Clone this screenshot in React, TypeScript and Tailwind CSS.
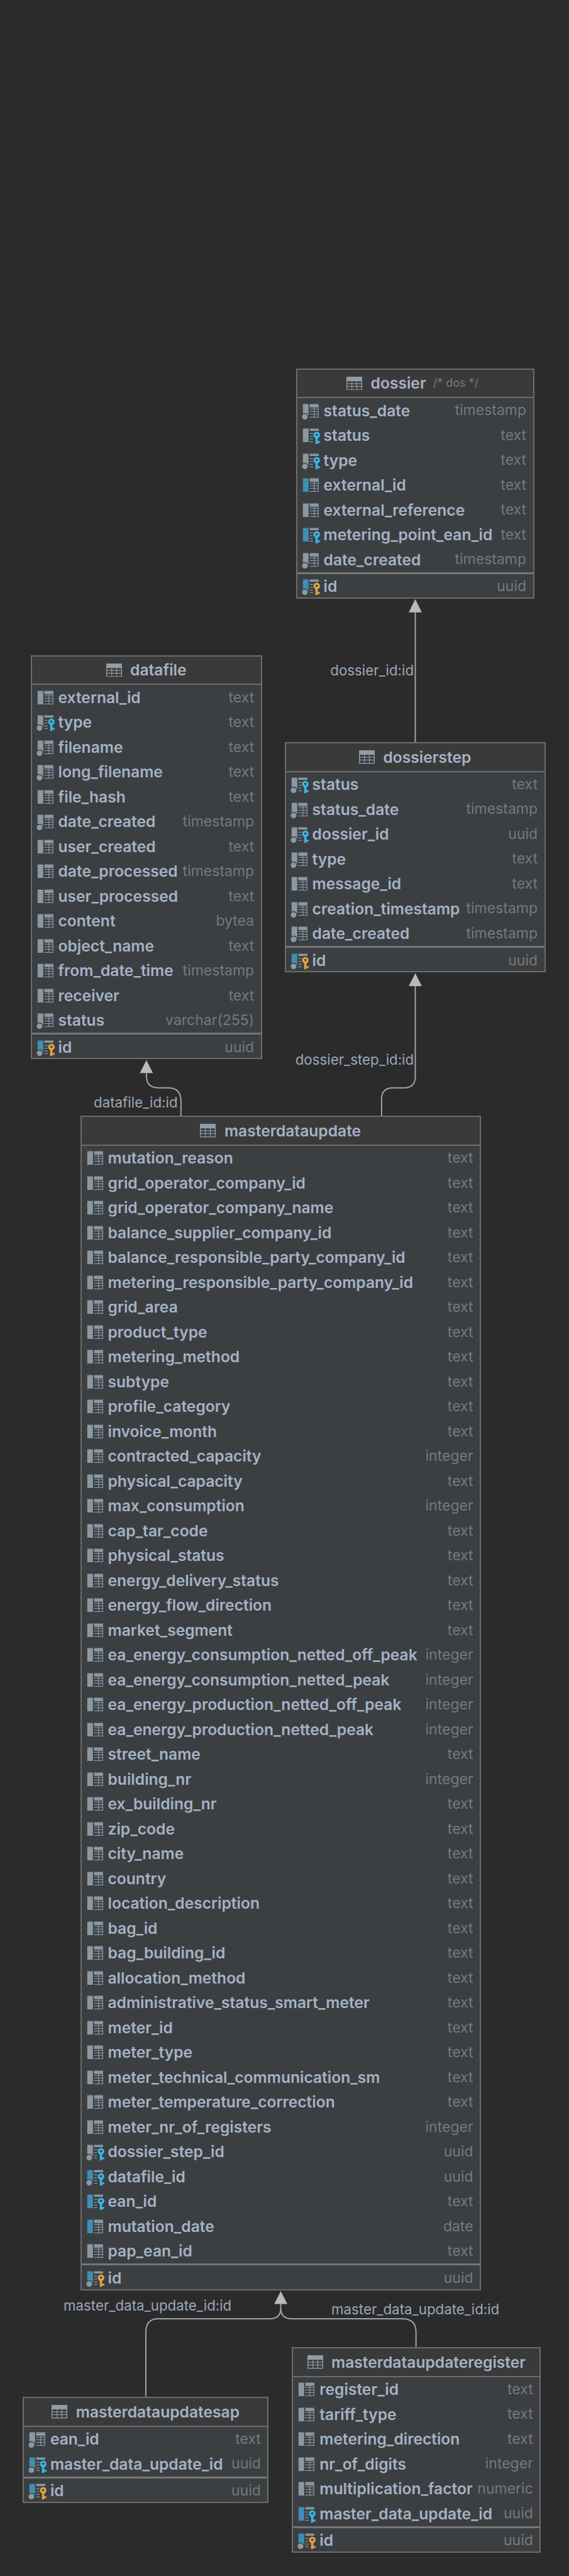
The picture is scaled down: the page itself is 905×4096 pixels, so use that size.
// Database diagram: six tables on a free canvas, joined by foreign key arrows.
// Measurements come from the 1008px reference, scaled by 0.898.

type Col = [name: string, type: string, flags?: string];

// flags: b = indexed (blue bar), n = not null (dot), f = foreign key, p = primary key
const DOSSIER: Col[] = [
  ['status_date', 'timestamp', 'n'],
  ['status', 'text', 'f'],
  ['type', 'text', 'nf'],
  ['external_id', 'text', 'b'],
  ['external_reference', 'text'],
  ['metering_point_ean_id', 'text', 'bf'],
  ['date_created', 'timestamp', 'n'],
];

const DATAFILE: Col[] = [
  ['external_id', 'text'],
  ['type', 'text', 'nf'],
  ['filename', 'text', 'n'],
  ['long_filename', 'text', 'n'],
  ['file_hash', 'text'],
  ['date_created', 'timestamp', 'n'],
  ['user_created', 'text'],
  ['date_processed', 'timestamp'],
  ['user_processed', 'text'],
  ['content', 'bytea'],
  ['object_name', 'text'],
  ['from_date_time', 'timestamp'],
  ['receiver', 'text'],
  ['status', 'varchar(255)', 'n'],
];

const DOSSIERSTEP: Col[] = [
  ['status', 'text', 'nf'],
  ['status_date', 'timestamp', 'n'],
  ['dossier_id', 'uuid', 'nf'],
  ['type', 'text', 'n'],
  ['message_id', 'text'],
  ['creation_timestamp', 'timestamp', 'n'],
  ['date_created', 'timestamp', 'n'],
];

const MASTER: Col[] = [
  ['mutation_reason', 'text'],
  ['grid_operator_company_id', 'text'],
  ['grid_operator_company_name', 'text'],
  ['balance_supplier_company_id', 'text'],
  ['balance_responsible_party_company_id', 'text'],
  ['metering_responsible_party_company_id', 'text'],
  ['grid_area', 'text'],
  ['product_type', 'text'],
  ['metering_method', 'text'],
  ['subtype', 'text'],
  ['profile_category', 'text'],
  ['invoice_month', 'text'],
  ['contracted_capacity', 'integer'],
  ['physical_capacity', 'text'],
  ['max_consumption', 'integer'],
  ['cap_tar_code', 'text'],
  ['physical_status', 'text'],
  ['energy_delivery_status', 'text'],
  ['energy_flow_direction', 'text'],
  ['market_segment', 'text'],
  ['ea_energy_consumption_netted_off_peak', 'integer'],
  ['ea_energy_consumption_netted_peak', 'integer'],
  ['ea_energy_production_netted_off_peak', 'integer'],
  ['ea_energy_production_netted_peak', 'integer'],
  ['street_name', 'text'],
  ['building_nr', 'integer'],
  ['ex_building_nr', 'text'],
  ['zip_code', 'text'],
  ['city_name', 'text'],
  ['country', 'text'],
  ['location_description', 'text'],
  ['bag_id', 'text'],
  ['bag_building_id', 'text'],
  ['allocation_method', 'text'],
  ['administrative_status_smart_meter', 'text'],
  ['meter_id', 'text'],
  ['meter_type', 'text'],
  ['meter_technical_communication_sm', 'text'],
  ['meter_temperature_correction', 'text'],
  ['meter_nr_of_registers', 'integer'],
  ['dossier_step_id', 'uuid', 'nf'],
  ['datafile_id', 'uuid', 'bnf'],
  ['ean_id', 'text', 'bf'],
  ['mutation_date', 'date', 'b'],
  ['pap_ean_id', 'text'],
];

const SAP: Col[] = [
  ['ean_id', 'text', 'n'],
  ['master_data_update_id', 'uuid', 'bnf'],
];

const REGISTER: Col[] = [
  ['register_id', 'text'],
  ['tariff_type', 'text'],
  ['metering_direction', 'text'],
  ['nr_of_digits', 'integer'],
  ['multiplication_factor', 'numeric'],
  ['master_data_update_id', 'uuid', 'bf'],
];

const ID: Col = ['id', 'uuid', 'bnp'];

const GREY = '#8a98a3';
const BLUE = '#3f8fb2';
const BODY = '#3b3f42';

function ColumnIcon({ flags = '' }: { flags?: string }) {
  const blue = flags.includes('b');
  const dot = flags.includes('n');
  const keyColor = flags.includes('p') ? '#e0a33c' : flags.includes('f') ? '#3cb4e5' : null;
  return (
    <svg viewBox="0 0 34 34" className="w-[30.5px] h-[30.5px] shrink-0">
      <rect x="2" y="5" width="10" height="24" fill={blue ? BLUE : GREY} />
      {keyColor ? (
        <g fill={GREY}>
          <rect x="14" y="5" width="16" height="4" />
          <rect x="14" y="13" width="6" height="1.4" />
          <rect x="14" y="18" width="6" height="1.4" />
          <rect x="14" y="23" width="6" height="1.4" />
          <rect x="14" y="27.6" width="6" height="1.4" />
        </g>
      ) : (
        <g fill={GREY}>
          <rect x="14" y="5" width="16" height="6" />
          <rect x="14" y="13" width="16" height="1.3" />
          <rect x="14" y="17.6" width="16" height="1.3" />
          <rect x="14" y="22.2" width="16" height="1.3" />
          <rect x="14" y="27.7" width="16" height="1.3" />
          <rect x="21.4" y="11" width="1.3" height="18" />
          <rect x="28.7" y="11" width="1.3" height="18" />
        </g>
      )}
      {dot && (
        <>
          <circle cx="5.5" cy="27.5" r="6.6" fill={BODY} />
          <rect x="13" y="24" width="1" height="8" fill={BODY} />
          <circle cx="5.5" cy="27.5" r="5" fill="#8e99a3" />
        </>
      )}
      {keyColor && (
        <>
          <circle cx="26.4" cy="17" r="7.2" fill={BODY} />
          <rect x="22.4" y="20" width="10" height="12" fill={BODY} />
          <g fill={keyColor}>
            <circle cx="26.4" cy="16.4" r="5.8" />
            <rect x="24.2" y="20" width="4.2" height="12.4" />
            <rect x="28" y="27" width="4.2" height="3.4" />
          </g>
          <circle cx="26.4" cy="16.2" r="2" fill={BODY} />
        </>
      )}
    </svg>
  );
}

function TableIcon() {
  return (
    <svg viewBox="0 0 28 24" className="w-[25px] h-[21.5px] shrink-0">
      <rect width="28" height="24" fill="#8f9daa" />
      <g fill="#3a3a3a">
        <rect x="1.5" y="8" width="7.5" height="3.6" />
        <rect x="10.3" y="8" width="7.5" height="3.6" />
        <rect x="19.1" y="8" width="7.4" height="3.6" />
        <rect x="1.5" y="13" width="7.5" height="3.6" />
        <rect x="10.3" y="13" width="7.5" height="3.6" />
        <rect x="19.1" y="13" width="7.4" height="3.6" />
        <rect x="1.5" y="18" width="7.5" height="4.5" />
        <rect x="10.3" y="18" width="7.5" height="4.5" />
        <rect x="19.1" y="18" width="7.4" height="4.5" />
      </g>
    </svg>
  );
}

function Row({ col, className = 'h-[39.51px]' }: { col: Col; className?: string }) {
  return (
    <div className={`flex items-center justify-between pl-[7px] pr-[10.5px] whitespace-nowrap ${className}`}>
      <div className="flex items-center min-w-0">
        <ColumnIcon flags={col[2]} />
        <span className="ml-[4.5px] font-semibold text-[24.6px] text-[#a5b2c4]">{col[0]}</span>
      </div>
      <span className="text-[23px] text-[#787878]">{col[1]}</span>
    </div>
  );
}

function DbTable({ title, comment, cols, className }: { title: string; comment?: string; cols: Col[]; className: string }) {
  return (
    <div className={`absolute border-2 border-[#6c6c6c] bg-[#3b3f42] leading-none ${className}`}>
      <div className={`h-[45.6px] flex items-center justify-center bg-[#3b3a3a] border-b-2 border-[#6c6c6c] ${comment ? 'pr-[8px]' : ''}`}>
        <TableIcon />
        <span className="ml-[13.5px] font-semibold text-[24.6px] text-[#a5b2c4]">{title}</span>
        {comment && <span className="ml-[11px] text-[#787878] text-[18px]">{comment}</span>}
      </div>
      {cols.map(c => (
        <Row key={c[0]} col={c} />
      ))}
      <div className="h-[3px] bg-[#777777]" />
      <Row col={ID} className="h-[37.2px] pt-[3px]" />
    </div>
  );
}

function Label({ text, className }: { text: string; className: string }) {
  return (
    <span className={`absolute h-[24px] leading-[24px] text-[22.3px] text-[#9aa8b8] whitespace-nowrap ${className}`}>{text}</span>
  );
}

export default function App() {
  return (
    <div className="relative w-[905px] h-[4096px] overflow-hidden bg-[#2b2b2b] font-['Inter',sans-serif]">
      <svg viewBox="0 0 1008 4560" className="absolute left-0 top-0 w-[905px] h-[4095px]" fill="none">
        <g stroke="#a3a3a3" strokeWidth="2.2">
          <path d="M735.7 1314V1084" />
          <path d="M676 1976V1946Q676 1926 696 1926H716Q735.7 1926 735.7 1906V1746" />
          <path d="M320.6 1976V1950Q320.6 1926 298 1926H280Q259.4 1926 259.4 1905V1900" />
          <path d="M258.4 4244V4130Q258.4 4106 280 4106H478Q497.4 4106 497.4 4088V4080" />
          <path d="M737 4156V4130Q737 4106 713 4106H517Q497.4 4106 497.4 4088" />
        </g>
        <g fill="#b9b9b9">
          <path d="M735.7 1060.5L747.3 1084H724.1Z" />
          <path d="M735.7 1723L747.3 1746H724.1Z" />
          <path d="M259.4 1877L271 1900H247.8Z" />
          <path d="M497.4 4057L509 4080H485.8Z" />
        </g>
      </svg>

      <DbTable title="dossier" comment="/* dos */" cols={DOSSIER} className="left-[470.6px] top-[585.5px] w-[379px]" />
      <DbTable title="datafile" cols={DATAFILE} className="left-[48.5px] top-[1041.7px] w-[368.2px]" />
      <DbTable title="dossierstep" cols={DOSSIERSTEP} className="left-[452.6px] top-[1180px] w-[415px]" />
      <DbTable title="masterdataupdate" cols={MASTER} className="left-[127.5px] top-[1774.4px] w-[637.6px]" />
      <DbTable title="masterdataupdatesap" cols={SAP} className="left-[35.9px] top-[3811px] w-[391.5px]" />
      <DbTable title="masterdataupdateregister" cols={REGISTER} className="left-[464.3px] top-[3732px] w-[396px]" />

      <Label text="dossier_id:id" className="left-[525.3px] top-[1054px]" />
      <Label text="dossier_step_id:id" className="left-[469.7px] top-[1672.6px]" />
      <Label text="datafile_id:id" className="left-[149px] top-[1741px]" />
      <Label text="master_data_update_id:id" className="left-[101px] top-[3653.6px]" />
      <Label text="master_data_update_id:id" className="left-[527px] top-[3660px]" />
    </div>
  );
}
